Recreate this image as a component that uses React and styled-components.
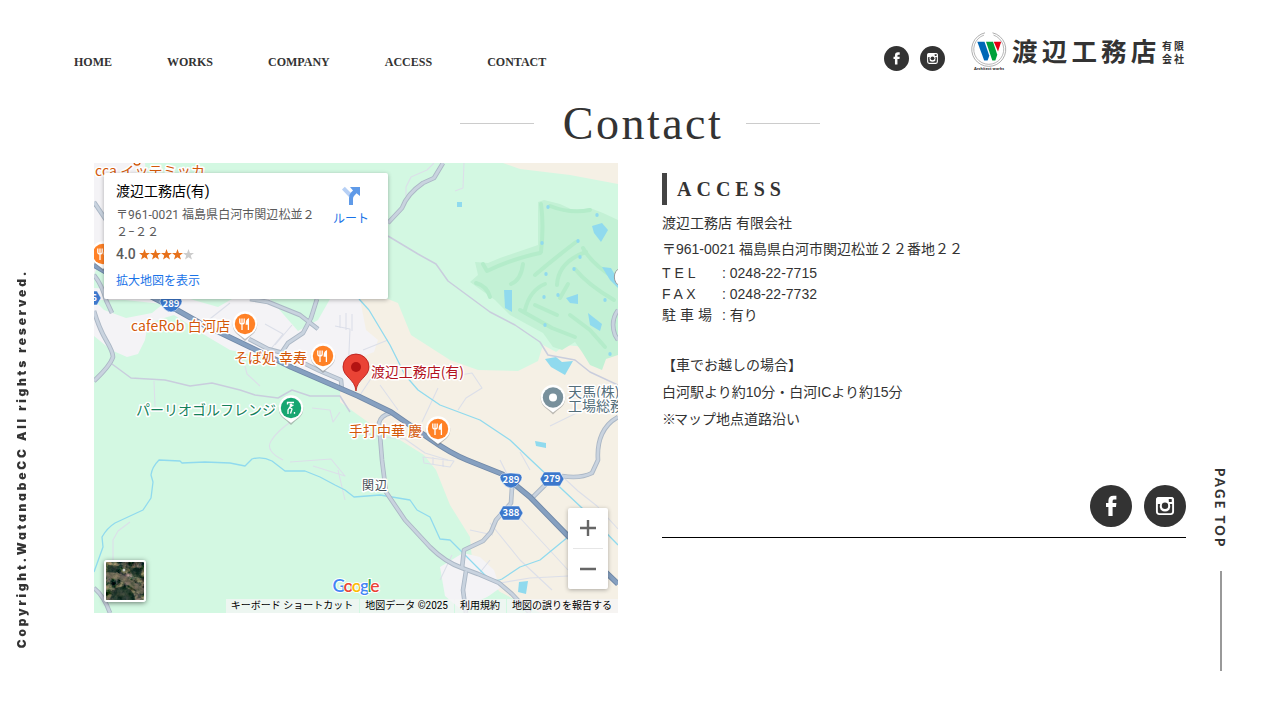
import React from "react";
import styled, { createGlobalStyle } from "styled-components";

const GlobalStyle = createGlobalStyle`
  * { box-sizing: border-box; }
  body {
    margin: 0;
    background: #fff;
    color: #333;
    font: 14px/21px "Liberation Sans", "Noto Sans CJK JP", sans-serif;
    overflow: hidden;
  }
  a { color: inherit; text-decoration: none; }
`;

const Page = styled.div`
  display: grid;
  grid-template-columns: 74px 1112px 94px;
  width: 1280px;
  height: 720px;
`;

const LeftRail = styled.aside`
  display: flex;
  align-items: flex-end;
  padding: 0 0 72px 12px;
`;

const Copyright = styled.small`
  writing-mode: vertical-rl;
  transform: rotate(180deg);
  font: 900 12px/20px Inter, sans-serif;
  font-feature-settings: "cv11";
  letter-spacing: 2.79px;
  white-space: nowrap;
`;

const RightRail = styled.aside`
  display: flex;
  flex-direction: column;
  align-items: flex-start;
  padding: 468px 0 0 24px;
`;

const PageTop = styled.a`
  display: flex;
  flex-direction: column;
  align-items: center;
  width: 21px;
  height: 203px;
  justify-content: space-between;
`;

const PageTopLabel = styled.span`
  margin-right: 1px;
  writing-mode: vertical-rl;
  font: 900 13px/20px Lato, sans-serif;
  letter-spacing: 2.3px;
  white-space: nowrap;
`;

const PageTopLine = styled.span`
  width: 2px;
  height: 100px;
  margin-left: 1px;
  background: #999;
`;

const Header = styled.header`
  display: flex;
  justify-content: space-between;
  height: 103px;
  padding-top: 32px;
`;

const Nav = styled.nav`
  display: flex;
  gap: 55px;
  padding-top: 20px;
  font: bold 12px/20px "Liberation Serif", serif;
`;

const HeaderRight = styled.div`
  display: flex;
  align-items: flex-start;
`;

const Socials = styled.div`
  display: flex;
  gap: ${(p) => p.$gap}px;
  padding-top: ${(p) => p.$top || 0}px;
  justify-content: flex-end;
  svg { display: block; }
`;

const Logo = styled.a`
  display: flex;
  align-items: flex-start;
  width: 215px;
  margin-left: 26px;
  svg { display: block; flex: none; }
`;

const LogoName = styled.span`
  width: 150px;
  margin: 4px 0 0 5px;
  font: 700 25.5px/28px "Noto Sans CJK JP", sans-serif;
  letter-spacing: 4.2px;
  white-space: nowrap;
`;

const LogoSuffix = styled.span`
  display: block;
  margin: 7px 0 0;
  font: 700 10px/13px "Noto Sans CJK JP", sans-serif;
  letter-spacing: 1.9px;
  white-space: nowrap;
`;

const TitleRow = styled.div`
  display: flex;
  align-items: center;
  justify-content: center;
  height: 41px;
  padding-left: 20px;
`;

const TitleLine = styled.span`
  width: 74px;
  height: 1px;
  background: #ccc;
`;

const Title = styled.h1`
  width: 212px;
  margin: 0;
  text-align: center;
  padding-left: 6px;
  font: 400 46px/43px "Liberation Serif", serif;
  letter-spacing: 2.5px;
`;

const Columns = styled.main`
  display: grid;
  grid-template-columns: 524px 524px;
  gap: 44px;
  padding: 19px 0 0 20px;
`;

const MapFrame = styled.section`
  position: relative;
  width: 524px;
  height: 450px;
  overflow: hidden;
  font-family: Roboto, "Noto Sans CJK JP", sans-serif;
`;

const MapCanvas = styled.svg`
  display: block;
  font-family: "Noto Sans CJK JP", sans-serif;
`;

const PlaceCard = styled.div`
  position: absolute;
  left: 10px;
  top: 10px;
  display: flex;
  width: 284px;
  height: 126px;
  padding: 9px 12px;
  background: #fff;
  border-radius: 2px;
  box-shadow: 0 1px 4px rgba(0, 0, 0, 0.3);
`;

const PlaceText = styled.div`
  width: 208px;
  flex: none;
`;

const PlaceName = styled.div`
  font-size: 14px;
  line-height: 19px;
  color: #000;
`;

const PlaceAddress = styled.div`
  margin-top: 6px;
  font-size: 12px;
  line-height: 17px;
  letter-spacing: 0.05px;
  color: #5b5b5b;
  white-space: nowrap;
`;

const Rating = styled.div`
  display: flex;
  align-items: center;
  gap: 3px;
  margin-top: 4px;
  height: 18px;
  font-size: 14px;
  font-weight: 500;
  color: #5b5b5b;
  svg { display: block; }
`;

const MapLink = styled.a`
  display: block;
  margin-top: 10px;
  font-size: 12px;
  line-height: 17px;
  color: #1a73e8;
`;

const Directions = styled.a`
  display: flex;
  flex: none;
  flex-direction: column;
  align-items: center;
  width: 54px;
  padding-top: 3px;
  font-size: 12px;
  line-height: 16px;
  color: #1a73e8;
  svg { display: block; margin-bottom: 5px; }
`;

const ZoomBox = styled.div`
  position: absolute;
  right: 10px;
  bottom: 24px;
  width: 40px;
  height: 81px;
  background: #fff;
  border-radius: 2px;
  box-shadow: 0 1px 4px rgba(0, 0, 0, 0.3);
  svg { display: block; }
`;

const Thumb = styled.div`
  position: absolute;
  left: 10px;
  top: 397px;
  width: 42px;
  height: 42px;
  border: 2px solid #fff;
  border-radius: 3px;
  overflow: hidden;
  box-shadow: 0 1px 5px rgba(0, 0, 0, 0.5);
  svg { display: block; }
`;

const MapFooter = styled.div`
  position: absolute;
  right: 0;
  bottom: 0;
  display: flex;
  gap: 1px;
  font-size: 10px;
  line-height: 14px;
  color: #000;
  white-space: nowrap;
`;

const FooterItem = styled.span`
  padding: 0 6px 0 5px;
  background: rgba(245, 245, 245, 0.75);
`;

const Info = styled.section`
  padding-top: 10px;
`;

const InfoTitle = styled.h2`
  margin: 0 0 5px;
  padding-left: 10px;
  border-left: 5px solid #444;
  font: bold 20px/32px "Liberation Serif", serif;
  letter-spacing: 5px;
`;

const Line = styled.p`
  margin: 0;
  line-height: ${(p) => p.$h}px;
`;

const NoteMark = styled.span`
  letter-spacing: -2px;
`;

const Contacts = styled.dl`
  display: grid;
  grid-template-columns: 60px auto;
  margin: 2px 0 26px;
  line-height: 21px;
`;

const Term = styled.dt`
  letter-spacing: ${(p) => p.$space}px;
  white-space: nowrap;
`;

const Detail = styled.dd`
  margin: 0;
`;

const InfoBottom = styled.div`
  margin-top: 52px;
  padding-bottom: 10px;
  border-bottom: 1px solid #000;
`;

function Facebook({ size }) {
  return (
    <svg width={size} height={size} viewBox="0 0 42 42">
      <circle cx="21" cy="21" r="21" fill="#333" />
      <path d="M18.400 31V22H16v-4h2.400v-2.200c0-3.200 1.800-5.100 5-5.100h3v3.800h-2c-1.200 0-1.800.6-1.800 1.700V18h3.800l-.4 4h-3.400v9z" fill="#fff" />
    </svg>
  );
}

function Instagram({ size }) {
  return (
    <svg width={size} height={size} viewBox="0 0 42 42">
      <circle cx="21" cy="21" r="21" fill="#333" />
      <rect x="12.900" y="12.900" width="16.200" height="16.200" rx="2.500" fill="none" stroke="#fff" strokeWidth="1.900" />
      <path d="M12 19h6a4 4 0 0 1 6 0h6v-4a3 3 0 0 0-3-3H15a3 3 0 0 0-3 3z" fill="#fff" />
      <circle cx="21" cy="21" r="5.600" fill="#fff" />
      <path d="M14 19h2.200a5.200 5.200 0 0 0 .2 5H14z M28 19h-2.200a5.200 5.200 0 0 1-.2 5H28z" fill="#333" />
      <circle cx="21" cy="20.700" r="3.200" fill="#333" />
      <rect x="24.800" y="14" width="3" height="3" rx=".4" fill="#333" />
    </svg>
  );
}

function LogoMark() {
  return (
    <svg width="36" height="40" viewBox="0 0 36 40">
      <path d="M14 .8A17 17 0 1 0 21.500 .8" fill="none" stroke="#999" strokeWidth=".8" />
      <path d="M13 3.100A15 15 0 1 0 22.500 3.100" fill="none" stroke="#999" strokeWidth=".7" />
      <path d="M6.300 9.800h7.200l4.800 14-1.700 4.700h-3.400z" fill="#0068b7" />
      <path d="M15 9.800h7l4.300 13-2 5.700H21.300z" fill="#00a13a" />
      <path d="M22.800 9.800h7.400l-3.200 9.700z" fill="#e60012" />
      <text x="3" y="38" fontFamily="Lato, sans-serif" fontSize="4" fontWeight="900" fill="#222" textLength="30">Architect works</text>
    </svg>
  );
}

function Star({ filled }) {
  return (
    <svg width="11" height="11" viewBox="0 0 24 24">
      <path d="M12 0l3.100 8.500 8.900.3-7 5.600 2.500 8.700L12 18l-7.500 5.100L7 14.400 0 8.800l8.900-.3z" fill={filled ? "#e7711b" : "#ccc"} />
    </svg>
  );
}

const rivers = [
  "M369 310L390 345 405 375 418 390 440 405 480 420 510 440 531 460 582 508 618 545",
  "M94 572L103 547 102 537Q107 528 115 523L143 510 151 498 153 482 151 475Q152 467 159 460L180 461 182 463 205 462 230 463 245 466 252 459Q262 456 272 461L285 471 305 471 320 477L335 485 345 490 354 497 380 495 410 500 417 510 430 517 440 539 450 540 465 555 480 570Q492 584 502 579L520 567 540 560 568 537",
  "M359 299L369 310",
];

const majorRoads = [
  "M94 311Q99 328 106 340T113 357Q110 366 94 381",
  "M94 275Q102 285 106 300L112 313",
  "M443 163L434 178 423 183Q407 194 402 208L388 223",
  "M391 413Q381 415 379 423L382 460 386 492 405 520 430 547Q445 562 462 568L478 574 499 583 512 594 530 613",
  "M462 568L464 550 483 541 491 532 496 520 511 503 512 487",
  "M532 498L546 484",
  "M562 476Q580 479 592 473L598 460Q597 445 602 434T618 417",
  "M466 571L463 590 466 613",
  "M249 339L268 349 283 353 320 371 341 380 342 391",
  "M282 352L288 343 303 333 311 318 317 299",
  "M250 299L268 302 300 315 318 329",
  "M94 588Q104 596 110 613",
  "M618 310Q610 321 615 335L618 340",
  "M94 202L106 220",
];

const mainRoad =
  "M94 265L125 283 177 310 200 323 254 349 291 367 358 396 391 412 430 439Q450 453 467 460L502 474 530 497 568 536 618 584";

const lanes = [
  "M388 236L418 254 436 264 448 281 490 312 515 325 540 342 548 355 575 360 590 372 618 385",
  "M112 364L131 378 165 380 190 386 212 383 240 390 255 395 278 398 292 390 310 396 340 396 350 412",
];

const minorRoads = [
  "M434 163L427 170 411 177 406 187V196",
  "M354 430L380 437 405 439 425 453 448 460",
  "M500 583L530 578 550 577 568 576",
  "M564 478L578 491 597 506 618 529",
  "M245 366L247 374 260 386 M154 381L155 407",
  "M292 421Q277 431 271 441T283 460",
  "M312 408L330 410 333 422 340 412",
  "M290 462L331 459 345 476 313 466 M338 470L345 500",
  "M113 560V540L118 531 130 522",
  "M423 457L454 461 450 467 424 463z M433 457v8 M443 459v8",
  "M490 523L520 560 552 590 M520 518L568 570",
  "M460 375L472 373 482 388 466 398 458 410 M422 422L438 388",
  "M550 426L595 404 M464 162L463 188 455 191",
  "M363 350L388 340 M358 398L378 368 M380 385L398 410",
  "M335 326L350 329 348 375 M340 328V315 M346 330V313 M352 331V314 M275 345L292 325 M206 322L230 303 M265 324L283 334 270 350",
  "M515 490L500 460 M530 470L520 452 M493 535L470 530 M440 580L452 555 M478 575L490 560",
];

const ponds = [
  "M457 202h5v5h-5z",
  "M592 226L602 223 608 230 601 242 594 233z",
  "M602 267L611 268 618 280 618 288 610 280z",
  "M504 290H512V312L505 308z",
  "M566 298L578 294V304L570 303z",
  "M545 359L556 357 562 362 573 361 565 375 551 367z",
  "M588 313L602 324 600 331 590 325z",
  "M535 441L546 443V448L536 446z",
  "M519 582L528 581 526 594 518 592z",
];

const fairways = [
  "M541 204Q544 225 541 252",
  "M483 264L487 271Q515 258 540 253",
  "M476 283Q487 286 490 297",
  "M523 264Q521 280 511 284",
  "M535 275Q555 258 576 242",
  "M557 285Q558 262 586 252",
  "M583 248Q592 265 618 280",
  "M575 269Q588 285 614 300",
  "M560 298L568 284",
  "M525 310Q530 290 545 284",
  "M550 206Q570 214 590 210",
  "M520 310L552 328 575 337",
  "M535 305L557 315",
  "M570 315L590 330 605 347",
];

const shields = [
  [171, 304, "289"],
  [511, 480, "289"],
];

const hexes = [
  [552, 479, "279"],
  [511, 513, "388"],
  [89, 298, "6"],
];

function Pin({ x, y, color, kind }) {
  return (
    <g transform={`translate(${x} ${y})`}>
      <path d="M0 16Q-4 12-8 9A12.300 12.300 0 1 1 8 9Q4 12 0 16z" fill="#777" opacity=".45" transform="translate(0 1)" />
      <path d="M0 15Q-4 12-8 9A12.300 12.300 0 1 1 8 9Q4 12 0 15z" fill="#fff" />
      <circle r="10.200" fill={color} />
      {kind === "food" && (
        <g fill="none" stroke="#fff" strokeWidth="1.300">
          <path d="M-5.200-5.500V-2Q-5.200 0-3 0T-.8-2V-5.500M-3-5.500V6" />
          <path d="M3.400 6V-5Q1.300-4 1.300 0H3.400" fill="#fff" />
        </g>
      )}
      {kind === "golf" && (
        <g fill="none" stroke="#fff" strokeWidth="1.300">
          <path d="M3-5.500H-3.500V-3.500M2.500-3L-1-1-3 2-3 6M-2-1L1 1-.5 5.500" />
          <circle cx="0" cy="-3" r=".8" fill="#fff" />
          <path d="M3.500 4v1.800" />
        </g>
      )}
      {kind === "dot" && <circle r="4" fill="#fff" />}
    </g>
  );
}

function Label({ x, y, color, children, size = 14, end, length }) {
  return (
    <text
      x={x}
      y={y}
      fill={color}
      fontSize={size}
      textAnchor={end ? "end" : "start"}
      textLength={length}
      stroke="#fff"
      strokeWidth="3"
      strokeLinejoin="round"
      paintOrder="stroke"
    >
      {children}
    </text>
  );
}

function MapDrawing() {
  return (
    <MapCanvas width="524" height="450" viewBox="94 163 524 450">
      <rect x="94" y="163" width="524" height="450" fill="#d3f8e2" />
      <path d="M503 163L520 169 570 175 618 184V163z" fill="#f5f0e5" />
      <path d="M340 299H388L398 303 402 313 411 335 450 360 478 370 518 371 538 361 543 345 556 352 565 345 618 350V613H540L500 592 472 560 470 537 450 505 436 470 424 455 400 440 372 425 340 402z" fill="#f5f0e5" />
      <path d="M94 163H145L148 200 104 225 94 225z" fill="#f4f3f6" />
      <path d="M94 225H104V250L94 275z M94 288L180 292 245 299H360L366 330 378 340 374 352 354 360V390L342 389 300 372 258 356 230 350 208 337 188 324 174 315 148 323 145 340 138 354 127 357 111 350 94 336z" fill="#f4f3f6" />
      <path d="M94 300L125 300 163 304 152 313 126 318 104 310z M190 299H232L218 307z M270 299H330L318 320 298 331z" fill="#d3f8e2" />
      <path d="M440 567L463 553 480 557 494 570 500 588 465 613 445 596z" fill="#f4f3f6" />
      <path d="M475 602L500 592 540 613H478z" fill="#d3f8e2" />
      <path d="M538 202L544 200 560 204 575 211 590 208 603 213 618 220V355L606 359 602 370 590 365 582 352 575 342 562 350 553 347 543 333 510 315 495 300 470 282 478 275 475 262 488 263 500 258 538 245z" fill="#c3f1d5" />
      <g fill="none" stroke="#b4ecca" strokeWidth="4" strokeLinecap="round" strokeLinejoin="round">
        {fairways.map((d) => <path key={d} d={d} />)}
      </g>
      <g fill="#90daee">
        {ponds.map((d) => <path key={d} d={d} />)}
        {[[548, 207], [542, 243], [578, 241], [580, 257], [574, 269], [546, 274], [544, 297], [558, 295], [597, 215], [605, 300], [545, 325], [610, 354]].map(([x, y]) => (
          <ellipse key={x + "-" + y} cx={x} cy={y} rx="1.700" ry="2" />
        ))}
      </g>
      <g fill="none" strokeLinejoin="round">
        <g stroke="#dcdfe9" strokeWidth="1.100">{minorRoads.map((d) => <path key={d} d={d} />)}</g>
        <g stroke="#c9cddd" strokeWidth="1.500">{lanes.map((d) => <path key={d} d={d} />)}</g>
        <g stroke="#90daee" strokeWidth="1.300">{rivers.map((d) => <path key={d} d={d} />)}</g>
        <g stroke="#abb7c5" strokeWidth="4.600">{majorRoads.map((d) => <path key={d} d={d} />)}</g>
        <g stroke="#c9d3df" strokeWidth="2.800">{majorRoads.map((d) => <path key={d} d={d} />)}</g>
        <path d={mainRoad} stroke="#7189a8" strokeWidth="5.600" />
        <path d={mainRoad} stroke="#86a0c0" strokeWidth="3.800" />
      </g>
      <g fill="#3c78cc" stroke="#fff" strokeWidth=".5">
        {shields.map(([x, y]) => (
          <path key={x} d={`M${x - 9} ${y - 6}Q${x} ${y - 8} ${x + 9} ${y - 6}Q${x + 13} ${y - 3} ${x + 9} ${y + 2}Q${x + 5} ${y + 8} ${x} ${y + 8}T${x - 9} ${y + 2}Q${x - 13} ${y - 3} ${x - 9} ${y - 6}z`} />
        ))}
        {hexes.map(([x, y]) => (
          <path key={x + "" + y} d={`M${x - 12} ${y}L${x - 8} ${y - 7}H${x + 8}L${x + 12} ${y} ${x + 8} ${y + 7}H${x - 8}z`} />
        ))}
      </g>
      <g fill="#fff" fontSize="9.5" fontWeight="700" textAnchor="middle" fontFamily='"Noto Sans CJK JP", sans-serif'>
        {[...shields, ...hexes].map(([x, y, n]) => <text key={x + "" + y} x={n === "6" ? 94 : x} y={y + 3}>{n}</text>)}
      </g>
      <Pin x={103} y={254} color="#ff8126" kind="food" />
      <Pin x={245} y={324} color="#ff8126" kind="food" />
      <Pin x={323} y={356} color="#ff8126" kind="food" />
      <Pin x={438} y={429} color="#ff8126" kind="food" />
      <Pin x={291} y={408} color="#17a671" kind="golf" />
      <Pin x={553} y={397.5} color="#78909c" kind="dot" />
      <path d="M620 268A10 10 0 0 0 620 286z" fill="#fff" stroke="#999" />
      <Label x={95} y={176} color="#d3590b" length={110}>cca イッテミッカ</Label>
      <circle cx="137" cy="162" r="3" fill="#fff" stroke="#d3590b" strokeWidth="1.300" />
      <Label x={230} y={331} color="#d3590b" end length={99}>cafeRob 白河店</Label>
      <Label x={307} y={363} color="#d3590b" end length={73}>そば処 幸寿</Label>
      <Label x={422} y={436} color="#d3590b" end length={73}>手打中華 慶</Label>
      <Label x={276} y={415} color="#14815a" end length={140}>パーリオゴルフレンジ</Label>
      <Label x={371} y={377} color="#b3121d" length={93}>渡辺工務店(有)</Label>
      <Label x={568} y={397} color="#546e7a">天馬(株)</Label>
      <Label x={568} y={411} color="#546e7a">工場総務</Label>
      <Label x={362} y={489.5} color="#454c55" size={12} length={25}>関辺</Label>
      <path d="M356 391C355 379 343 377 343 366.800A13 12.800 0 1 1 369 366.800C369 377 357 379 356 391z" fill="#ea4335" stroke="#b31412" strokeWidth=".8" />
      <circle cx="356" cy="367" r="5" fill="#b31412" />
      <text x="332.500" y="592" fontFamily="Lato, sans-serif" fontSize="17.500" textLength="47" stroke="#fff" strokeWidth="2" paintOrder="stroke" fontWeight="600">
        <tspan fill="#4285f4">G</tspan><tspan fill="#ea4335">o</tspan><tspan fill="#fbbc04">o</tspan><tspan fill="#4285f4">g</tspan><tspan fill="#34a853">l</tspan><tspan fill="#ea4335">e</tspan>
      </text>
    </MapCanvas>
  );
}

function Satellite() {
  return (
    <svg width="38" height="38" viewBox="0 0 38 38">
      <defs>
        <filter id="terrain" x="0" y="0" width="100%" height="100%" colorInterpolationFilters="sRGB">
          <feTurbulence type="fractalNoise" baseFrequency=".17" numOctaves="4" seed="8" />
          <feColorMatrix values="1.300 0 0 0 -.36  .9 .2 0 0 -.23  .8 0 .2 0 -.25  0 0 0 0 1" />
        </filter>
      </defs>
      <rect width="38" height="38" filter="url(#terrain)" />
      <path d="M0 13Q10 12 18 17T38 30" fill="none" stroke="#857a68" strokeWidth="6" opacity=".6" />
      <path d="M4 38Q8 23 18 25T29 38z M2 3L14 4 10 11 1 10z M22 5L34 7 36 16 28 15z" fill="#132c23" opacity=".65" />
      <circle cx="18" cy="8" r="1.500" fill="#c8ccca" />
    </svg>
  );
}

function AccessMap() {
  return (
    <MapFrame>
      <MapDrawing />
      <PlaceCard>
        <PlaceText>
          <PlaceName>渡辺工務店(有)</PlaceName>
          <PlaceAddress>〒961-0021 福島県白河市関辺松並２<br />２−２２</PlaceAddress>
          <Rating>
            4.0
            <Socials $gap={0}>{[1, 2, 3, 4, 5].map((n) => <Star key={n} filled={n < 5} />)}</Socials>
          </Rating>
          <MapLink>拡大地図を表示</MapLink>
        </PlaceText>
        <Directions>
          <svg width="20" height="21" viewBox="0 0 20 21">
            <path d="M1 4.500L3.800 1.700 10.500 8.500 8 12z" fill="#b7d0f5" />
            <path d="M8 20V13Q8 9.500 10 7.500L12 5.500 9 2H19V11L15.500 8.300 13 11Q12 12 12 14V20z" fill="#5f9ae8" />
          </svg>
          ルート
        </Directions>
      </PlaceCard>
      <Thumb><Satellite /></Thumb>
      <ZoomBox>
        <svg width="40" height="81" viewBox="0 0 40 81">
          <path d="M12 20H28M20 12V28M12 61H28" stroke="#666" strokeWidth="2.400" />
          <path d="M5 40.500H35" stroke="#e6e6e6" />
        </svg>
      </ZoomBox>
      <MapFooter>
        <FooterItem>キーボード ショートカット</FooterItem>
        <FooterItem>地図データ ©2025</FooterItem>
        <FooterItem>利用規約</FooterItem>
        <FooterItem>地図の誤りを報告する</FooterItem>
      </MapFooter>
    </MapFrame>
  );
}

export default function App() {
  return (
    <Page>
      <GlobalStyle />
      <LeftRail><Copyright>Copyright.WatanabeCC All rights reserved.</Copyright></LeftRail>
      <div>
        <Header>
          <Nav>
            {["HOME", "WORKS", "COMPANY", "ACCESS", "CONTACT"].map((t) => <a key={t} href="#">{t}</a>)}
          </Nav>
          <HeaderRight>
            <Socials $gap={11} $top={14}>
              <Facebook size={25} />
              <Instagram size={25} />
            </Socials>
            <Logo href="#">
              <LogoMark />
              <LogoName>渡辺工務店</LogoName>
              <LogoSuffix>有限<br />会社</LogoSuffix>
            </Logo>
          </HeaderRight>
        </Header>
        <TitleRow>
          <TitleLine />
          <Title>Contact</Title>
          <TitleLine />
        </TitleRow>
        <Columns>
          <AccessMap />
          <Info>
            <InfoTitle>ACCESS</InfoTitle>
            <Line $h={27}>渡辺工務店 有限会社</Line>
            <Line $h={24}>〒961-0021 福島県白河市関辺松並２２番地２２</Line>
            <Contacts>
              <Term $space={3.9}>TEL</Term><Detail>: 0248-22-7715</Detail>
              <Term $space={3.6}>FAX</Term><Detail>: 0248-22-7732</Detail>
              <Term $space={4}>駐車場</Term><Detail>: 有り</Detail>
            </Contacts>
            <Line $h={27}>【車でお越しの場合】</Line>
            <Line $h={27}>白河駅より約10分・白河ICより約15分</Line>
            <Line $h={27}><NoteMark>※</NoteMark>マップ地点道路沿い</Line>
            <InfoBottom>
              <Socials $gap={12}>
                <Facebook size={42} />
                <Instagram size={42} />
              </Socials>
            </InfoBottom>
          </Info>
        </Columns>
      </div>
      <RightRail>
        <PageTop href="#">
          <PageTopLabel>PAGE TOP</PageTopLabel>
          <PageTopLine />
        </PageTop>
      </RightRail>
    </Page>
  );
}
